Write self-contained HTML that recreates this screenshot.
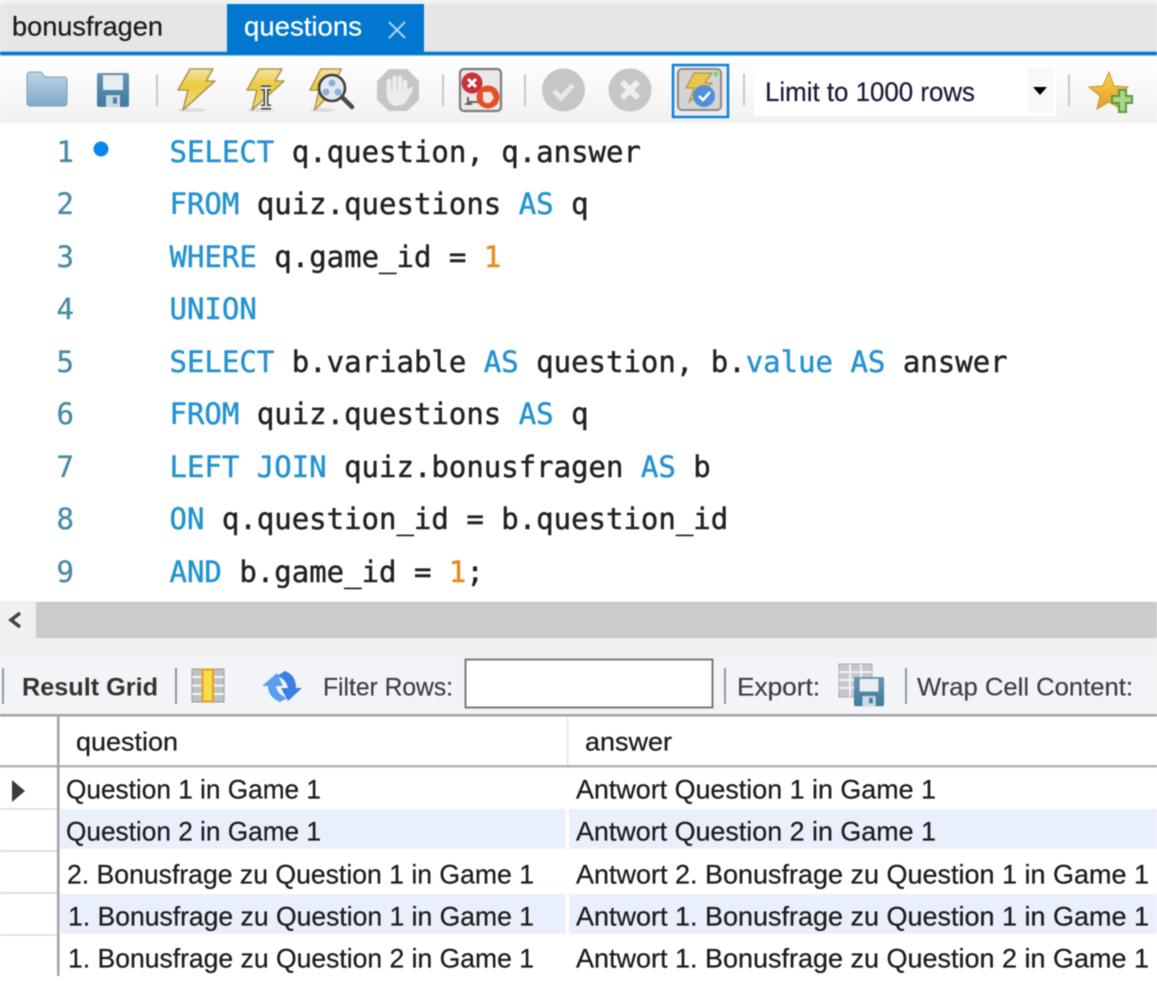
<!DOCTYPE html>
<html><head><meta charset="utf-8">
<style>
html,body{margin:0;padding:0;background:#fff;width:1157px;height:983px;overflow:hidden}
svg{display:block;filter:blur(.6px)}
.u{font-family:"Liberation Sans",sans-serif;font-size:27px;fill:#1c1c1c;stroke:#1c1c1c;stroke-width:.25}
.t{font-family:"Liberation Sans",sans-serif;font-size:25px;fill:#3a3f4a;stroke:#3a3f4a;stroke-width:.2}
.c{font-family:"DejaVu Sans Mono",monospace;font-size:29px;fill:#222;stroke:#222;stroke-width:.45;white-space:pre}
.k{fill:#2593d0;stroke:#2593d0}.n{fill:#e8871e;stroke:#e8871e}
.l{font-family:"DejaVu Sans Mono",monospace;font-size:29px;fill:#4a8ba5;stroke:#4a8ba5;stroke-width:.3}
</style></head><body>
<svg width="1157" height="983" viewBox="0 0 1157 983" xmlns="http://www.w3.org/2000/svg">
<defs>
<linearGradient id="tb" x1="0" y1="0" x2="0" y2="1"><stop offset="0" stop-color="#fff"/><stop offset="1" stop-color="#f1f1f1"/></linearGradient>
<linearGradient id="fo" x1="0" y1="0" x2="0" y2="1"><stop offset="0" stop-color="#bdd6e7"/><stop offset="1" stop-color="#80a9c6"/></linearGradient>
<linearGradient id="bo" x1="0" y1="0" x2="0" y2="1"><stop offset="0" stop-color="#f0e3ac"/><stop offset=".4" stop-color="#eccb3c"/><stop offset="1" stop-color="#ecdc9a"/></linearGradient>
<linearGradient id="st" x1="0" y1="0" x2="0" y2="1"><stop offset="0" stop-color="#fbd34a"/><stop offset="1" stop-color="#e8992a"/></linearGradient>
<linearGradient id="sv" x1="0" y1="0" x2="0" y2="1"><stop offset="0" stop-color="#6596b4"/><stop offset="1" stop-color="#3f7a9e"/></linearGradient>
<g id="bolt"><ellipse cx="14" cy="42" rx="14" ry="2" fill="#ddd"/><path d="M12 1H35L28 13H37L5 42L10 22H0Z" fill="url(#bo)" stroke="#b2974a" stroke-width="1.6" stroke-linejoin="round"/></g>
<g id="savei"><rect x="0" y="0" width="32" height="32" rx="2" fill="url(#sv)"/><rect x="6" y="2" width="20" height="14" fill="#e9eef2"/><rect x="9" y="21" width="14" height="11" fill="#cfdbe3"/><rect x="16" y="23" width="4" height="6" fill="#4f7f9d"/></g>
</defs>
<rect width="1157" height="983" fill="#fff"/>

<!-- tab bar -->
<rect x="0" y="0" width="1157" height="4" fill="#f0f0f0"/>
<rect x="0" y="4" width="1157" height="47" fill="#e6e6e6"/>
<rect x="227" y="4" width="197" height="48" fill="#0277d0"/>
<rect x="0" y="51" width="1157" height="1" fill="#8fc4ec"/>
<rect x="227" y="51" width="197" height="1" fill="#0277d0"/>
<rect x="0" y="52" width="1157" height="3" fill="#0277d0"/>
<rect x="0" y="55" width="1157" height="1" fill="#8fc4ec"/>
<text class="u" x="12" y="35.5" textLength="151" lengthAdjust="spacingAndGlyphs">bonusfragen</text>
<text class="u" x="244" y="35.5" textLength="118" lengthAdjust="spacingAndGlyphs" style="fill:#fff;stroke:#fff">questions</text>
<path d="M389 22L405 38M405 22L389 38" stroke="#a9d2f0" stroke-width="2"/>

<!-- toolbar -->
<rect x="0" y="56" width="1157" height="67" fill="url(#tb)"/>
<path d="M27 102V76Q27 72 31 72H41L45 77H64Q67 77 67 81V102Q67 106 64 106H30Q27 106 27 102Z" fill="url(#fo)" stroke="#7a9fb8" stroke-width="1"/>
<use href="#savei" transform="translate(97 73) scale(1 1.06)"/>
<rect x="156" y="74" width="2" height="32" fill="#c8c8c8"/>
<use href="#bolt" transform="translate(178 68)"/>
<use href="#bolt" transform="translate(247 68)"/>
<path d="M261 88H271M261 107H271M266 88V107" stroke="#444" stroke-width="5"/>
<path d="M261 88H271M261 107H271M266 88V107" stroke="#eee" stroke-width="2"/>
<use href="#bolt" transform="translate(310 68) scale(.9 1)"/>
<circle cx="332" cy="88" r="13" fill="#e2e9ee" stroke="#404040" stroke-width="2.6"/>
<circle cx="332" cy="83" r="3.5" fill="#8fb0da"/><circle cx="326" cy="92" r="3.5" fill="#8fb0da"/><circle cx="338" cy="92" r="3.5" fill="#8fb0da"/>
<path d="M342 97L352 107" stroke="#4a4a4a" stroke-width="4.5" stroke-linecap="round"/>
<path d="M389 69H407L419 81V100L407 111H389L377 100V81Z" fill="#c6c6c6"/>
<path d="M389 81V96M394.500 78V94M400 78V94M405 82V96" stroke="#ececec" stroke-width="4.6" stroke-linecap="round"/>
<path d="M387 90H407L412 86 413 90 406 102Q402 106 396 106 388 105 387 96Z" fill="#ececec"/>
<rect x="442" y="74" width="2" height="32" fill="#c8c8c8"/>
<rect x="460" y="69" width="41" height="42" rx="4" fill="#e9e9e9" stroke="#7d7d7d" stroke-width="2.2"/>
<circle cx="472" cy="83" r="10.500" fill="#c8323a"/>
<path d="M468 79L476 87M476 79L468 87" stroke="#fff" stroke-width="3"/>
<path d="M465 104H472M468 97V102H478" stroke="#666" stroke-width="2" fill="none"/>
<circle cx="488" cy="97" r="11.500" fill="#e2502a"/>
<path d="M483 100V92H491L494 98 490 103H485Z" fill="#f7e3dc"/>
<rect x="524" y="74" width="2" height="32" fill="#c8c8c8"/>
<circle cx="563.500" cy="90" r="21.500" fill="#c6c6c6"/>
<path d="M554 91L561 98L573 85" stroke="#e8e8e8" stroke-width="5" fill="none"/>
<circle cx="630" cy="90" r="21.500" fill="#c6c6c6"/>
<path d="M622 82L638 98M638 82L622 98" stroke="#eeeeee" stroke-width="6"/>
<rect x="673" y="65" width="55" height="52" fill="#ececec" stroke="#0f80dc" stroke-width="2.5"/>
<rect x="678" y="69" width="43" height="41" rx="4" fill="#d4d4d4" stroke="#8a8a8a" stroke-width="2"/>
<path d="M694 73H712L705 83H712L689 102L694 88H686Z" fill="#e7c64a" stroke="#a88b36" stroke-width="1"/>
<circle cx="716" cy="74" r="2.500" fill="#6fdc6f"/>
<circle cx="704" cy="96" r="11" fill="#4f8fdc"/>
<path d="M699 96L703 100L710 92" stroke="#fff" stroke-width="2.500" fill="none"/>
<rect x="743" y="74" width="2" height="32" fill="#c8c8c8"/>
<rect x="754" y="64" width="302" height="52" fill="#fff"/>
<rect x="1027" y="67" width="27" height="46" fill="#f8f8f8"/>
<text class="u" x="765" y="101" textLength="210" lengthAdjust="spacingAndGlyphs" style="fill:#1c1c3a;stroke:#1c1c3a">Limit to 1000 rows</text>
<path d="M1033 87H1047L1040 95Z" fill="#000"/>
<rect x="1068" y="74" width="2" height="32" fill="#c8c8c8"/>
<path d="M1109 72L1114 86L1128 87L1118 96L1121 109L1109 102L1097 109L1100 96L1089 87L1103 86Z" fill="url(#st)" stroke="#c6952c" stroke-width="1"/>
<path d="M1119 90H1126V96H1132V103H1126V112H1119V103H1112V96H1119Z" fill="#a9d78c" stroke="#5a9a3c" stroke-width="2"/>

<!-- editor -->
<text class="l" x="56.500" y="162">1</text>
<circle cx="101" cy="149" r="7.500" fill="#0a84ee"/>
<text class="l" x="56.500" y="214">2</text>
<text class="l" x="56.500" y="267">3</text>
<text class="l" x="56.500" y="319">4</text>
<text class="l" x="56.500" y="372">5</text>
<text class="l" x="56.500" y="424">6</text>
<text class="l" x="56.500" y="477">7</text>
<text class="l" x="56.500" y="529">8</text>
<text class="l" x="56.500" y="582">9</text>

<text class="c" x="169.500" y="162" xml:space="preserve"><tspan class="k">SELECT</tspan> q.question, q.answer</text>
<text class="c" x="169.500" y="214" xml:space="preserve"><tspan class="k">FROM</tspan> quiz.questions <tspan class="k">AS</tspan> q</text>
<text class="c" x="169.500" y="267" xml:space="preserve"><tspan class="k">WHERE</tspan> q.game_id = <tspan class="n">1</tspan></text>
<text class="c" x="169.500" y="319" xml:space="preserve"><tspan class="k">UNION</tspan></text>
<text class="c" x="169.500" y="372" xml:space="preserve"><tspan class="k">SELECT</tspan> b.variable <tspan class="k">AS</tspan> question, b.<tspan class="k">value</tspan> <tspan class="k">AS</tspan> answer</text>
<text class="c" x="169.500" y="424" xml:space="preserve"><tspan class="k">FROM</tspan> quiz.questions <tspan class="k">AS</tspan> q</text>
<text class="c" x="169.500" y="477" xml:space="preserve"><tspan class="k">LEFT JOIN</tspan> quiz.bonusfragen <tspan class="k">AS</tspan> b</text>
<text class="c" x="169.500" y="529" xml:space="preserve"><tspan class="k">ON</tspan> q.question_id = b.question_id</text>
<text class="c" x="169.500" y="582" xml:space="preserve"><tspan class="k">AND</tspan> b.game_id = <tspan class="n">1</tspan>;</text>

<!-- h scrollbar -->
<rect x="0" y="601" width="1157" height="56" fill="#f0f0f0"/>
<rect x="36" y="602" width="1121" height="36" fill="#cbcbcb"/>
<path d="M20 613L11 620L20 627" fill="none" stroke="#444" stroke-width="3.500"/>

<!-- result toolbar -->
<rect x="0" y="657" width="1157" height="57" fill="#f3f4f8"/>
<rect x="2" y="668" width="2" height="36" fill="#8e9aa8"/>
<text class="t" x="22" y="695.500" textLength="136" lengthAdjust="spacingAndGlyphs" style="font-weight:700;fill:#333;stroke:none">Result Grid</text>
<rect x="175" y="668" width="2" height="36" fill="#8e9aa8"/>
<rect x="192" y="669" width="32" height="33" fill="#bfc3c6" stroke="#9a9a9a"/>
<path d="M192 677H224M192 685.500H224M192 694H224" stroke="#f4f4f4" stroke-width="2"/>
<rect x="202.500" y="669.500" width="10.500" height="32" fill="#fadc4a" stroke="#e0a020" stroke-width="2"/>
<path d="M262 686L277 673L283 686H276Q277 694 287 698L280 702Q268 697 268 686Z" fill="#5aa0ee"/>
<path d="M302 688L288 701L281 688H288Q286 679 277 676L285 671Q296 675 296 688Z" fill="#3a7fe2"/>
<text class="t" x="323" y="695.500" textLength="130" lengthAdjust="spacingAndGlyphs">Filter Rows:</text>
<rect x="465.500" y="659.500" width="247" height="48" fill="#fff" stroke="#7a7a7a" stroke-width="2"/>
<rect x="724" y="668" width="2" height="36" fill="#8e9aa8"/>
<text class="t" x="737" y="695.500" textLength="83" lengthAdjust="spacingAndGlyphs">Export:</text>
<rect x="839" y="664" width="33" height="33" fill="#c4c8cc" stroke="#aaa"/>
<path d="M839 672H872M839 680H872M839 688H872M850 664V697M861 664V697" stroke="#f2f2f2" stroke-width="2"/>
<use href="#savei" transform="translate(854 677) scale(.94 .91)"/>
<rect x="905" y="668" width="2" height="36" fill="#8e9aa8"/>
<text class="t" x="917" y="695.500" textLength="216" lengthAdjust="spacingAndGlyphs">Wrap Cell Content:</text>

<!-- grid -->
<rect x="0" y="714" width="1157" height="2.500" fill="#a3a3a3"/>
<rect x="0" y="765" width="1157" height="2.500" fill="#b4b4b4"/>
<text class="u" x="76" y="750.500" textLength="102" lengthAdjust="spacingAndGlyphs" style="font-size:26px">question</text>
<rect x="567" y="716" width="1.500" height="49" fill="#e4e4e4"/>
<text class="u" x="585" y="750.500" textLength="87" lengthAdjust="spacingAndGlyphs" style="font-size:26px">answer</text>

<rect x="60" y="809" width="506" height="40" fill="#e9f0fb"/>
<rect x="569" y="809" width="588" height="40" fill="#e9f0fb"/>
<rect x="60" y="894" width="506" height="40" fill="#e9f0fb"/>
<rect x="569" y="894" width="588" height="40" fill="#e9f0fb"/>
<rect x="0" y="808" width="57" height="2" fill="#e2e2e2"/>
<rect x="0" y="850" width="57" height="2" fill="#e2e2e2"/>
<rect x="0" y="892" width="57" height="2" fill="#e2e2e2"/>
<rect x="0" y="934" width="57" height="2" fill="#e2e2e2"/>
<rect x="57" y="716" width="2.500" height="260" fill="#a3a3a3"/>
<path d="M12 780L25 791L12 802Z" fill="#3c3c3c"/>

<text class="u" x="66" y="798.500" textLength="255" lengthAdjust="spacingAndGlyphs">Question 1 in Game 1</text>
<text class="u" x="66" y="840.500" textLength="255" lengthAdjust="spacingAndGlyphs">Question 2 in Game 1</text>
<text class="u" x="67" y="883.500" textLength="467" lengthAdjust="spacingAndGlyphs">2. Bonusfrage zu Question 1 in Game 1</text>
<text class="u" x="68" y="925.500" textLength="466" lengthAdjust="spacingAndGlyphs">1. Bonusfrage zu Question 1 in Game 1</text>
<text class="u" x="68" y="967.500" textLength="466" lengthAdjust="spacingAndGlyphs">1. Bonusfrage zu Question 2 in Game 1</text>
<text class="u" x="576" y="798.500" textLength="360" lengthAdjust="spacingAndGlyphs">Antwort Question 1 in Game 1</text>
<text class="u" x="576" y="840.500" textLength="360" lengthAdjust="spacingAndGlyphs">Antwort Question 2 in Game 1</text>
<text class="u" x="576" y="883.500" textLength="573" lengthAdjust="spacingAndGlyphs">Antwort 2. Bonusfrage zu Question 1 in Game 1</text>
<text class="u" x="576" y="925.500" textLength="573" lengthAdjust="spacingAndGlyphs">Antwort 1. Bonusfrage zu Question 1 in Game 1</text>
<text class="u" x="576" y="967.500" textLength="573" lengthAdjust="spacingAndGlyphs">Antwort 1. Bonusfrage zu Question 2 in Game 1</text>
</svg>
</body></html>
